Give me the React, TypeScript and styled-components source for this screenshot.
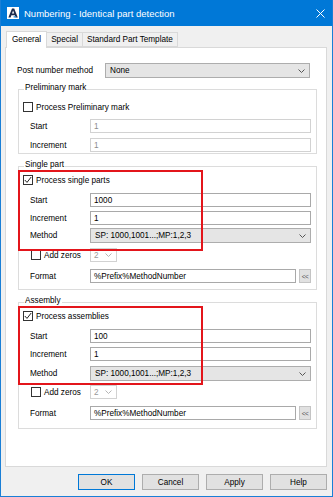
import React from 'react'
import styled, {createGlobalStyle} from 'styled-components'

const GlobalStyle = createGlobalStyle`
  html, body {
    margin: 0;
    padding: 0;
  }
  body {
    background: #ffffff;
    font-family: "Liberation Sans", Arial, sans-serif;
  }
`

const Window = styled.div`
  box-sizing: border-box;
  width: 333px;
  height: 497px;
  display: flex;
  flex-direction: column;
  background: #f0f0f0;
  border: 1px solid #1a7fd6;
  border-top: 0;
  font-size: 8.2px;
  color: #000;
`

const TitleBar = styled.div`
  flex: none;
  height: 26px;
  display: flex;
  align-items: center;
  gap: 5px;
  padding: 0 7px 0 6px;
  background: #0078d7;
  color: #fff;
`

const TitleText = styled.span`
  font-size: 9.5px;
  white-space: nowrap;
`

const CloseButton = styled.div`
  margin-left: auto;
  display: flex;
  align-items: center;
`

const Body = styled.div`
  flex: 1;
  display: flex;
  flex-direction: column;
  min-height: 0;
  padding: 5px 5px 6px 4px;
`

const TabStrip = styled.div`
  flex: none;
  height: 16px;
  display: flex;
  align-items: flex-end;
  padding-left: 2px;
`

const Tab = styled.div<{$active?: boolean}>`
  position: relative;
  z-index: ${p => (p.$active ? 1 : 0)};
  box-sizing: border-box;
  height: ${p => (p.$active ? 17 : 15)}px;
  margin-bottom: ${p => (p.$active ? -1 : 0)}px;
  margin-left: -1px;
  padding: ${p => (p.$active ? '0 5px 1px' : '0 4px')};
  display: flex;
  align-items: center;
  background: ${p => (p.$active ? '#ffffff' : '#f0f0f0')};
  border: 1px solid #d9d9d9;
  border-bottom: ${p => (p.$active ? '0' : '1px solid #d9d9d9')};
  white-space: nowrap;
`

const Panel = styled.div`
  flex: 1;
  display: flex;
  flex-direction: column;
  background: #ffffff;
  border: 1px solid #d9d9d9;
  padding: 0 9px 0 12px;
`

const TopRow = styled.div`
  display: grid;
  grid-template-columns: 88px 1fr;
  align-items: center;
  height: 15px;
  margin: 15px 7px 0 -1px;
`

const Group = styled.div<{$gap: number; $pad: number}>`
  position: relative;
  border: 1px solid #dcdcdc;
  margin-top: ${p => p.$gap}px;
  padding-bottom: ${p => p.$pad}px;
`

const GroupTitle = styled.div`
  width: fit-content;
  height: 12px;
  line-height: 12px;
  margin: -8px 0 0 5px;
  padding: 0 1px;
  background: #ffffff;
  white-space: nowrap;
`

const CheckRow = styled.div<{$gap: number}>`
  display: flex;
  align-items: center;
  gap: 3px;
  height: 14px;
  margin-top: ${p => p.$gap}px;
  padding-left: 4px;
  white-space: nowrap;
`

const FieldRow = styled.div<{$gap: number; $tall?: boolean}>`
  display: grid;
  grid-template-columns: 60px 1fr;
  align-items: center;
  height: ${p => (p.$tall ? 15 : 14)}px;
  margin-top: ${p => p.$gap}px;
  padding: 0 5px 0 11px;
`

const Label = styled.span`
  white-space: nowrap;
`

const InlineCheck = styled.label`
  display: flex;
  align-items: center;
  gap: 3px;
  margin-left: 1px;
  white-space: nowrap;
`

const TextBox = styled.div<{$disabled?: boolean}>`
  box-sizing: border-box;
  height: 14px;
  display: flex;
  align-items: center;
  padding-left: 3px;
  background: #ffffff;
  border: 1px solid ${p => (p.$disabled ? '#d2d2d2' : '#a9a9a9')};
  color: ${p => (p.$disabled ? '#8c8c8c' : '#000')};
  white-space: nowrap;
  overflow: hidden;
`

const FormatBox = styled.div`
  display: flex;
  align-items: center;
  gap: 3px;
  ${TextBox} {
    flex: 1;
  }
`

const SmallButton = styled.div`
  box-sizing: border-box;
  width: 12px;
  height: 14px;
  display: flex;
  align-items: center;
  justify-content: center;
  background: #e1e1e1;
  border: 1px solid #c4c4c4;
  color: #555;
  font-size: 6.5px;
  letter-spacing: -0.5px;
`

const ComboBox = styled.div<{$small?: boolean}>`
  box-sizing: border-box;
  height: ${p => (p.$small ? 14 : 15)}px;
  width: ${p => (p.$small ? '27px' : 'auto')};
  display: flex;
  align-items: center;
  justify-content: space-between;
  padding: 0 4px 0 ${p => (p.$small ? 3 : 4)}px;
  background: ${p => (p.$small ? '#ffffff' : '#e5e5e5')};
  border: 1px solid ${p => (p.$small ? '#d2d2d2' : '#adadad')};
  color: ${p => (p.$small ? '#9a9a9a' : '#000')};
  white-space: nowrap;
`

const Box = styled.span`
  box-sizing: border-box;
  flex: none;
  width: 10px;
  height: 10px;
  display: flex;
  align-items: center;
  justify-content: center;
  background: #ffffff;
  border: 1px solid #333333;
`

const Highlight = styled.div<{$top: number; $height: number}>`
  position: absolute;
  left: -1px;
  top: ${p => p.$top}px;
  width: 185px;
  height: ${p => p.$height}px;
  box-sizing: border-box;
  border: 2px solid #e3151b;
  pointer-events: none;
`

const ButtonRow = styled.div`
  flex: none;
  display: flex;
  justify-content: flex-end;
  gap: 7px;
  margin-top: 7px;
`

const DialogButton = styled.div<{$primary?: boolean}>`
  box-sizing: border-box;
  width: 57px;
  height: 16px;
  display: flex;
  align-items: center;
  justify-content: center;
  background: #e1e1e1;
  border: 1px solid ${p => (p.$primary ? '#0078d7' : '#adadad')};
`

const Chevron = ({color = '#555'}: {color?: string}) => (
  <svg width="7" height="4" viewBox="0 0 7 4">
    <polyline points="0.5,0.5 3.5,3.5 6.5,0.5" fill="none" stroke={color} strokeWidth="1" />
  </svg>
)

const CheckBox = ({checked}: {checked?: boolean}) => (
  <Box>
    {checked && (
      <svg width="8" height="8" viewBox="0 0 8 8">
        <polyline points="0.8,4 3,6.4 7.2,1" fill="none" stroke="#222" strokeWidth="1" />
      </svg>
    )}
  </Box>
)

const AppIcon = () => (
  <svg width="12" height="12" viewBox="0 0 12 12">
    <rect x="0" y="0" width="12" height="12" fill="#ffffff" />
    <path d="M5 1.5 H7.2 L10.8 10.5 H8.6 L7.8 8.3 H4.4 L3.6 10.5 H1.4 Z M5 6.6 H7.2 L6.1 3.6 Z" fill="#1c2b4d" fillRule="evenodd" />
    <rect x="6.6" y="9.2" width="2.6" height="1.3" fill="#2d8fd8" />
  </svg>
)

const CloseIcon = () => (
  <svg width="9" height="9" viewBox="0 0 9 9">
    <path d="M0.5 0.5 L8.5 8.5 M8.5 0.5 L0.5 8.5" stroke="#ffffff" strokeWidth="1" />
  </svg>
)

type PartGroupProps = {
  title: string
  checkLabel: string
  start: string
  gap: number
  methodGap: number
  zerosGap: number
  pad: number
  boxHeight: number
}

const PartGroup = ({title, checkLabel, start, gap, methodGap, zerosGap, pad, boxHeight}: PartGroupProps) => (
  <Group $gap={gap} $pad={pad}>
    <GroupTitle>{title}</GroupTitle>
    <CheckRow $gap={2}>
      <CheckBox checked />
      {checkLabel}
    </CheckRow>
    <FieldRow $gap={6}>
      <Label>Start</Label>
      <TextBox>{start}</TextBox>
    </FieldRow>
    <FieldRow $gap={4}>
      <Label>Increment</Label>
      <TextBox>1</TextBox>
    </FieldRow>
    <FieldRow $gap={methodGap} $tall>
      <Label>Method</Label>
      <ComboBox>
        <span>SP: 1000,1001...;MP:1,2,3</span>
        <Chevron />
      </ComboBox>
    </FieldRow>
    <FieldRow $gap={zerosGap}>
      <InlineCheck>
        <CheckBox />
        Add zeros
      </InlineCheck>
      <ComboBox $small>
        <span>2</span>
        <Chevron color="#b5b5b5" />
      </ComboBox>
    </FieldRow>
    <FieldRow $gap={7}>
      <Label>Format</Label>
      <FormatBox>
        <TextBox>%Prefix%MethodNumber</TextBox>
        <SmallButton>&lt;&lt;</SmallButton>
      </FormatBox>
    </FieldRow>
    <Highlight $top={3} $height={boxHeight} />
  </Group>
)

export default function App() {
  return (
    <>
      <GlobalStyle />
      <Window>
        <TitleBar>
          <AppIcon />
          <TitleText>Numbering - Identical part detection</TitleText>
          <CloseButton>
            <CloseIcon />
          </CloseButton>
        </TitleBar>
        <Body>
          <TabStrip>
            <Tab $active>General</Tab>
            <Tab>Special</Tab>
            <Tab>Standard Part Template</Tab>
          </TabStrip>
          <Panel>
            <TopRow>
              <Label>Post number method</Label>
              <ComboBox>
                <span>None</span>
                <Chevron />
              </ComboBox>
            </TopRow>

            <Group $gap={11} $pad={1}>
              <GroupTitle>Preliminary mark</GroupTitle>
              <CheckRow $gap={6}>
                <CheckBox />
                Process Preliminary mark
              </CheckRow>
              <FieldRow $gap={5}>
                <Label>Start</Label>
                <TextBox $disabled>1</TextBox>
              </FieldRow>
              <FieldRow $gap={5}>
                <Label>Increment</Label>
                <TextBox $disabled>1</TextBox>
              </FieldRow>
            </Group>

            <PartGroup
              title="Single part"
              checkLabel="Process single parts"
              start="1000"
              gap={12}
              methodGap={3}
              zerosGap={5}
              pad={6}
              boxHeight={81}
            />
            <PartGroup
              title="Assembly"
              checkLabel="Process assemblies"
              start="100"
              gap={12}
              methodGap={5}
              zerosGap={4}
              pad={8}
              boxHeight={79}
            />
          </Panel>
          <ButtonRow>
            <DialogButton $primary>OK</DialogButton>
            <DialogButton>Cancel</DialogButton>
            <DialogButton>Apply</DialogButton>
            <DialogButton>Help</DialogButton>
          </ButtonRow>
        </Body>
      </Window>
    </>
  )
}
